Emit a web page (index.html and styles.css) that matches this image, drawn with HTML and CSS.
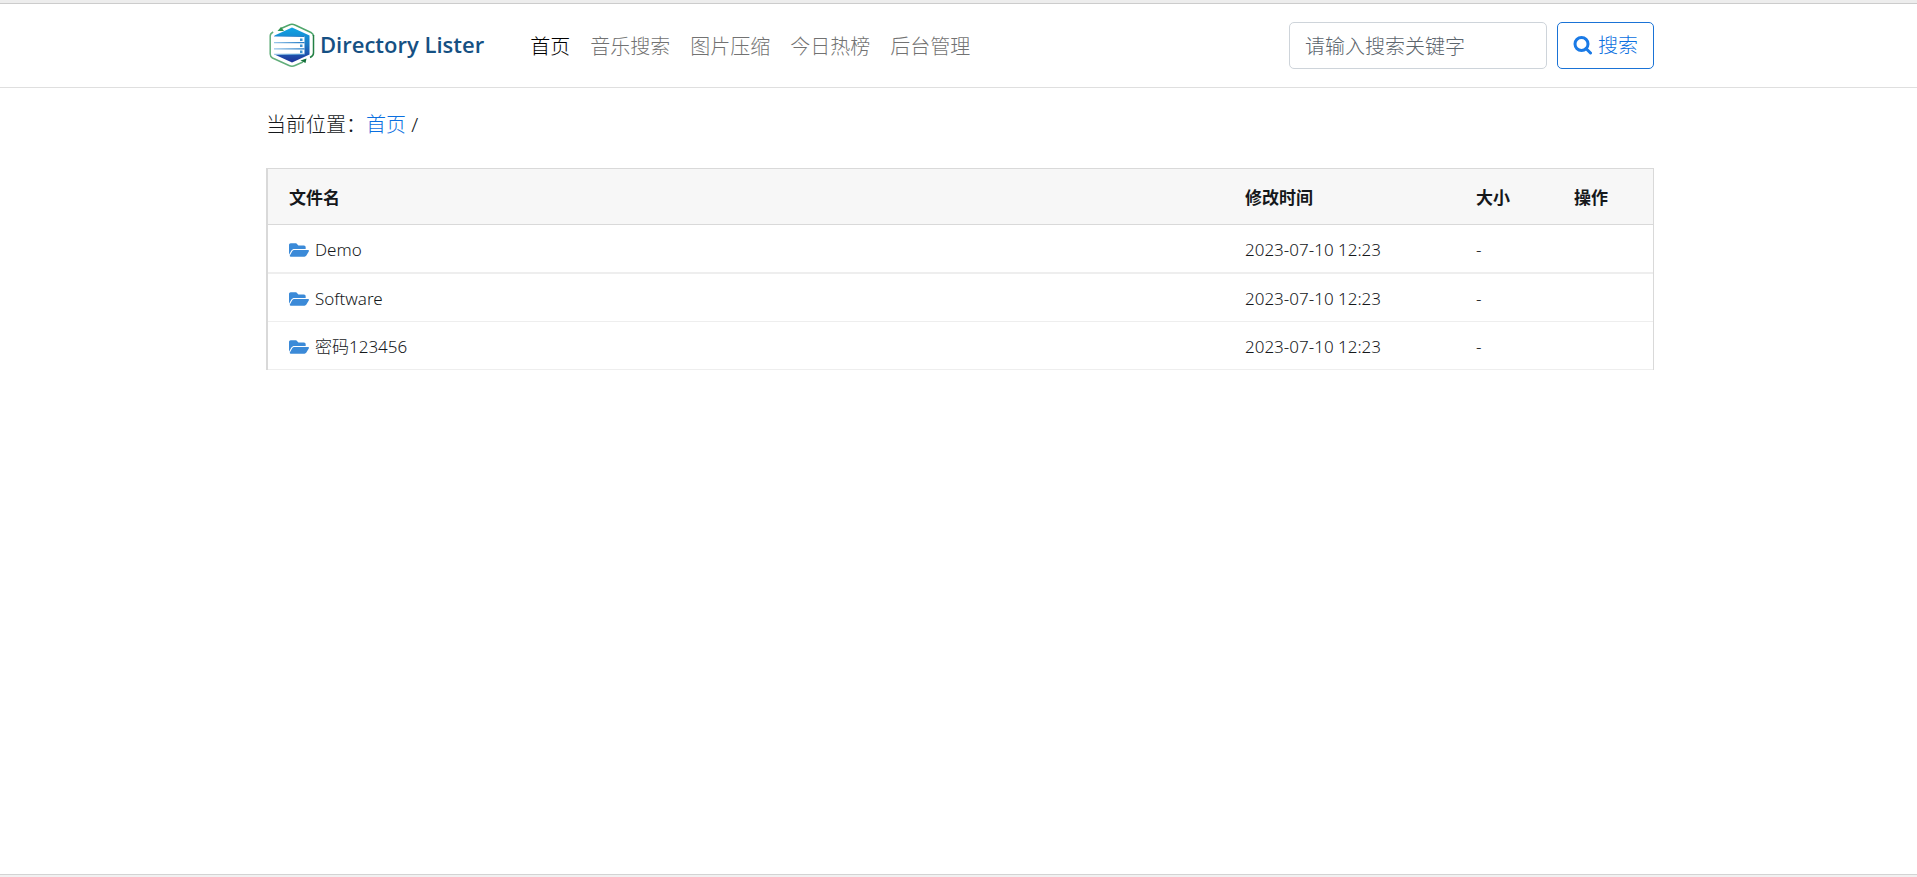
FILE: index.html
```html
<!DOCTYPE html>
<html lang="zh-CN">
<head>
<meta charset="utf-8">
<title>Directory Lister</title>
<link rel="stylesheet" href="styles.css">
</head>
<body>
<header class="header">
  <div class="container navbar">
    <a class="brand" href="#">
      <svg class="brand-mark" viewBox="0 0 46 44" aria-hidden="true">
        <defs>
          <linearGradient id="hex" x1="0" y1="0" x2="0" y2="1">
            <stop offset="0" stop-color="#10a5e4"/>
            <stop offset=".5" stop-color="#1c78c4"/>
            <stop offset="1" stop-color="#1f3199"/>
          </linearGradient>
          <linearGradient id="bar" gradientUnits="userSpaceOnUse" x1="5" y1="0" x2="36" y2="0">
            <stop offset="0" stop-color="#9cc8ea"/>
            <stop offset="1" stop-color="#1c78c4"/>
          </linearGradient>
        </defs>
        <path d="M23 4.500 40.500 12.500v19L23 39.500 5.500 31.500V12.500z" fill="url(#hex)"/>
        <path d="M4.500 13H35.500v18.500H4.500z" fill="#fff"/>
        <path d="M5 13h30.500v1H5zM5 19h30.500v1.200H5zM5 25.200h30.500v1.200H5zM5 30.800h30.500v1H5z" fill="url(#bar)"/>
        <path d="M31 15.500h2.500V18H31zM31 21.600h2.500V24H31zM31 27.600h2.500V30H31z" fill="#3b93d2"/>
        <g fill="none" stroke-width="1.500" stroke-linejoin="round">
          <path d="M12 5.500 20 2Q23 .5 26 2l16 7.500Q44.500 11 44.500 13" stroke="#4fa66c"/>
          <path d="M34 39 26 42.500q-3 1.500-6 0L3.500 35Q1.200 33.500 1.200 31V13q0-2.500 3-4" stroke="#62ae7b"/>
          <path d="M44.500 12v18q0 3-3.500 4.500" stroke="#238044"/>
        </g>
        <path d="m8.500 8 3.500-4 3 4z" fill="#339350"/>
        <path d="m31.500 37.500 6-2-1 4.500z" fill="#14713a"/>
      </svg>
      <span>Directory Lister</span>
    </a>
    <nav class="menu">
      <a class="menu-link active" href="#">首页</a>
      <a class="menu-link" href="#">音乐搜索</a>
      <a class="menu-link" href="#">图片压缩</a>
      <a class="menu-link" href="#">今日热榜</a>
      <a class="menu-link" href="#">后台管理</a>
    </nav>
    <form class="search">
      <input class="search-input" type="search" placeholder="请输入搜索关键字" aria-label="请输入搜索关键字">
      <button class="search-button" type="submit">
        <svg class="search-icon" viewBox="0 0 19 19" aria-hidden="true"><circle cx="8.500" cy="8" r="6.500"/><path d="m13 12.500 4.500 4.500" stroke-linecap="round"/></svg>
        搜索
      </button>
    </form>
  </div>
</header>
<svg class="sprite" aria-hidden="true">
  <symbol id="folder" viewBox="0 0 576 512"><path d="M572.694 292.093 500.270 416.248A63.997 63.997 0 0 1 444.989 448H45.025c-18.523 0-30.064-20.093-20.731-36.093l72.424-124.155A64 64 0 0 1 152 256h399.964c18.523 0 30.064 20.093 20.730 36.093zM152 224h328v-48c0-26.510-21.490-48-48-48H272l-64-64H48C21.490 64 0 85.490 0 112v278.046l69.077-118.418C86.214 242.250 117.989 224 152 224z"/></symbol>
</svg>
<main class="container main">
  <div class="breadcrumb">当前位置：<a href="#">首页</a> /</div>
  <table class="files">
    <thead>
      <tr><th>文件名</th><th class="col-time">修改时间</th><th class="col-size">大小</th><th class="col-action">操作</th></tr>
    </thead>
    <tbody>
      <tr><td><a class="file" href="#"><svg class="file-icon"><use href="#folder"/></svg>Demo</a></td><td>2023-07-10 12:23</td><td>-</td><td></td></tr>
      <tr><td><a class="file" href="#"><svg class="file-icon"><use href="#folder"/></svg>Software</a></td><td>2023-07-10 12:23</td><td>-</td><td></td></tr>
      <tr><td><a class="file" href="#"><svg class="file-icon"><use href="#folder"/></svg>密码123456</a></td><td>2023-07-10 12:23</td><td>-</td><td></td></tr>
    </tbody>
  </table>
</main>
</body>
</html>
```
FILE: styles.css
```css
* { box-sizing: border-box; }

body {
  display: flex;
  flex-direction: column;
  min-height: 100vh;
  margin: 0;
  border-top: 3px solid #ededed;
  border-bottom: 2px solid #f1f1f1;
  background: #fff;
  color: #15181b;
  font-family: "Noto Sans", "Noto Sans CJK SC", sans-serif;
  font-size: 20px;
  font-weight: 300;
  line-height: 30px;
}

body::after {
  content: "";
  border-bottom: 1px solid #d3d3d3;
}

a { color: #0a6fe0; text-decoration: none; }

.container {
  width: 100%;
  max-width: 1391px;
  margin: 0 auto;
  padding-left: 3px;
}

.header {
  border-top: 1px solid #ccc;
  border-bottom: 1px solid #dfdfdf;
}

.navbar {
  display: flex;
  align-items: center;
  height: 83px;
}

.brand {
  display: flex;
  align-items: center;
  gap: 5px;
  margin-left: 3px;
  padding-bottom: 2px;
  color: #155083;
  font-family: "Open Sans", sans-serif;
  font-size: 22px;
  font-weight: 600;
  line-height: 28px;
}

.brand span { padding-bottom: 2px; }

.brand-mark { width: 46px; height: 44px; }

.menu {
  display: flex;
  flex: 1;
  gap: 20px;
  margin-left: 46px;
  padding-top: 2px;
}

.menu-link { color: #727272; }
.menu-link.active { color: #000; }

.search { display: flex; gap: 10px; }

.search-input,
.search-button {
  height: 47px;
  border: 1px solid #ced4da;
  border-radius: 5px;
  background: #fff;
  font: inherit;
}

.search-input { width: 258px; padding: 2px 15px 0; }
.search-input::placeholder { color: #5c656d; opacity: 1; }

.search-button {
  display: flex;
  align-items: center;
  gap: 6px;
  padding: 0 15px;
  border-color: #1a73d6;
  color: #0a6fe0;
}

.search-icon {
  width: 19px;
  height: 19px;
  fill: none;
  stroke: #1a7ae6;
  stroke-width: 3;
}

.sprite { display: none; }

.main {
  flex: 1;
  padding-top: 22px;
}

.breadcrumb { margin-bottom: 28px; }

.files {
  width: 100%;
  border: 1px solid #d9d9d9;
  border-left-width: 2px;
  border-bottom: 0;
  border-spacing: 0;
  table-layout: fixed;
  font-size: 17px;
  line-height: 27px;
}

.files th,
.files td {
  padding: 11px 20px 9px 21px;
  border-bottom: 1px solid #eee;
  text-align: left;
}

.files th {
  padding-top: 15px;
  padding-bottom: 13px;
  border-color: #d9d9d9;
  background: #f7f7f7;
  font-weight: 700;
}

.files tbody tr:first-child td { border-bottom-width: 2px; }

.col-time { width: 231px; }
.col-size { width: 98px; }
.col-action { width: 100px; }

.file {
  display: flex;
  align-items: center;
  gap: 6px;
  color: inherit;
}

.file-icon { width: 20px; height: 18px; fill: #3b8ad8; }
```
